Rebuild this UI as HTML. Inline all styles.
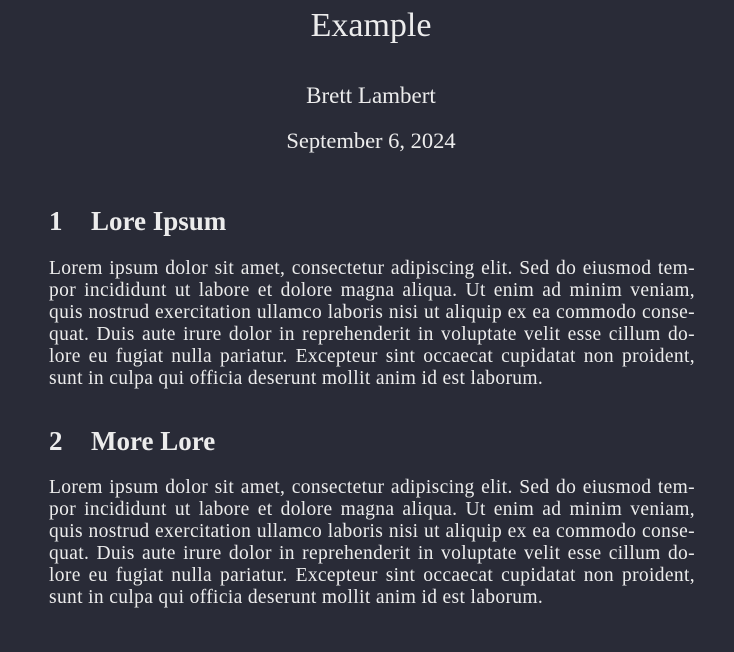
<!DOCTYPE html>
<html><head><meta charset="utf-8"><style>
html,body{margin:0;padding:0;width:734px;height:652px;background:#292b37;color:#ececec;font-family:"Liberation Serif",serif;overflow:hidden}
.c{position:absolute;left:4px;width:734px;text-align:center}
.h{position:absolute;left:49px;font-weight:bold;font-size:27px;line-height:30px}
.h span{position:absolute;left:42px;white-space:nowrap}
.p{position:absolute;left:49px;width:646px;font-size:19.5px;letter-spacing:0.35px}
.p div{height:22px;line-height:22px;text-align:justify;text-align-last:justify;white-space:nowrap}
.p div.l{text-align-last:left}
</style></head><body>
<div class="c" style="top:6px;font-size:34px;line-height:40px">Example</div>
<div class="c" style="top:82px;font-size:23px;line-height:28px">Brett Lambert</div>
<div class="c" style="top:127px;font-size:22.5px;line-height:28px">September 6, 2024</div>
<div class="h" style="top:206px">1<span>Lore Ipsum</span></div>
<div class="p" style="top:258px">
<div>Lorem ipsum dolor sit amet, consectetur adipiscing elit. Sed do eiusmod tem-</div>
<div>por incididunt ut labore et dolore magna aliqua. Ut enim ad minim veniam,</div>
<div>quis nostrud exercitation ullamco laboris nisi ut aliquip ex ea commodo conse-</div>
<div>quat. Duis aute irure dolor in reprehenderit in voluptate velit esse cillum do-</div>
<div>lore eu fugiat nulla pariatur. Excepteur sint occaecat cupidatat non proident,</div>
<div class="l">sunt in culpa qui officia deserunt mollit anim id est laborum.</div>
</div>
<div class="h" style="top:426px">2<span>More Lore</span></div>
<div class="p" style="top:477px">
<div>Lorem ipsum dolor sit amet, consectetur adipiscing elit. Sed do eiusmod tem-</div>
<div>por incididunt ut labore et dolore magna aliqua. Ut enim ad minim veniam,</div>
<div>quis nostrud exercitation ullamco laboris nisi ut aliquip ex ea commodo conse-</div>
<div>quat. Duis aute irure dolor in reprehenderit in voluptate velit esse cillum do-</div>
<div>lore eu fugiat nulla pariatur. Excepteur sint occaecat cupidatat non proident,</div>
<div class="l">sunt in culpa qui officia deserunt mollit anim id est laborum.</div>
</div>
</body></html>
